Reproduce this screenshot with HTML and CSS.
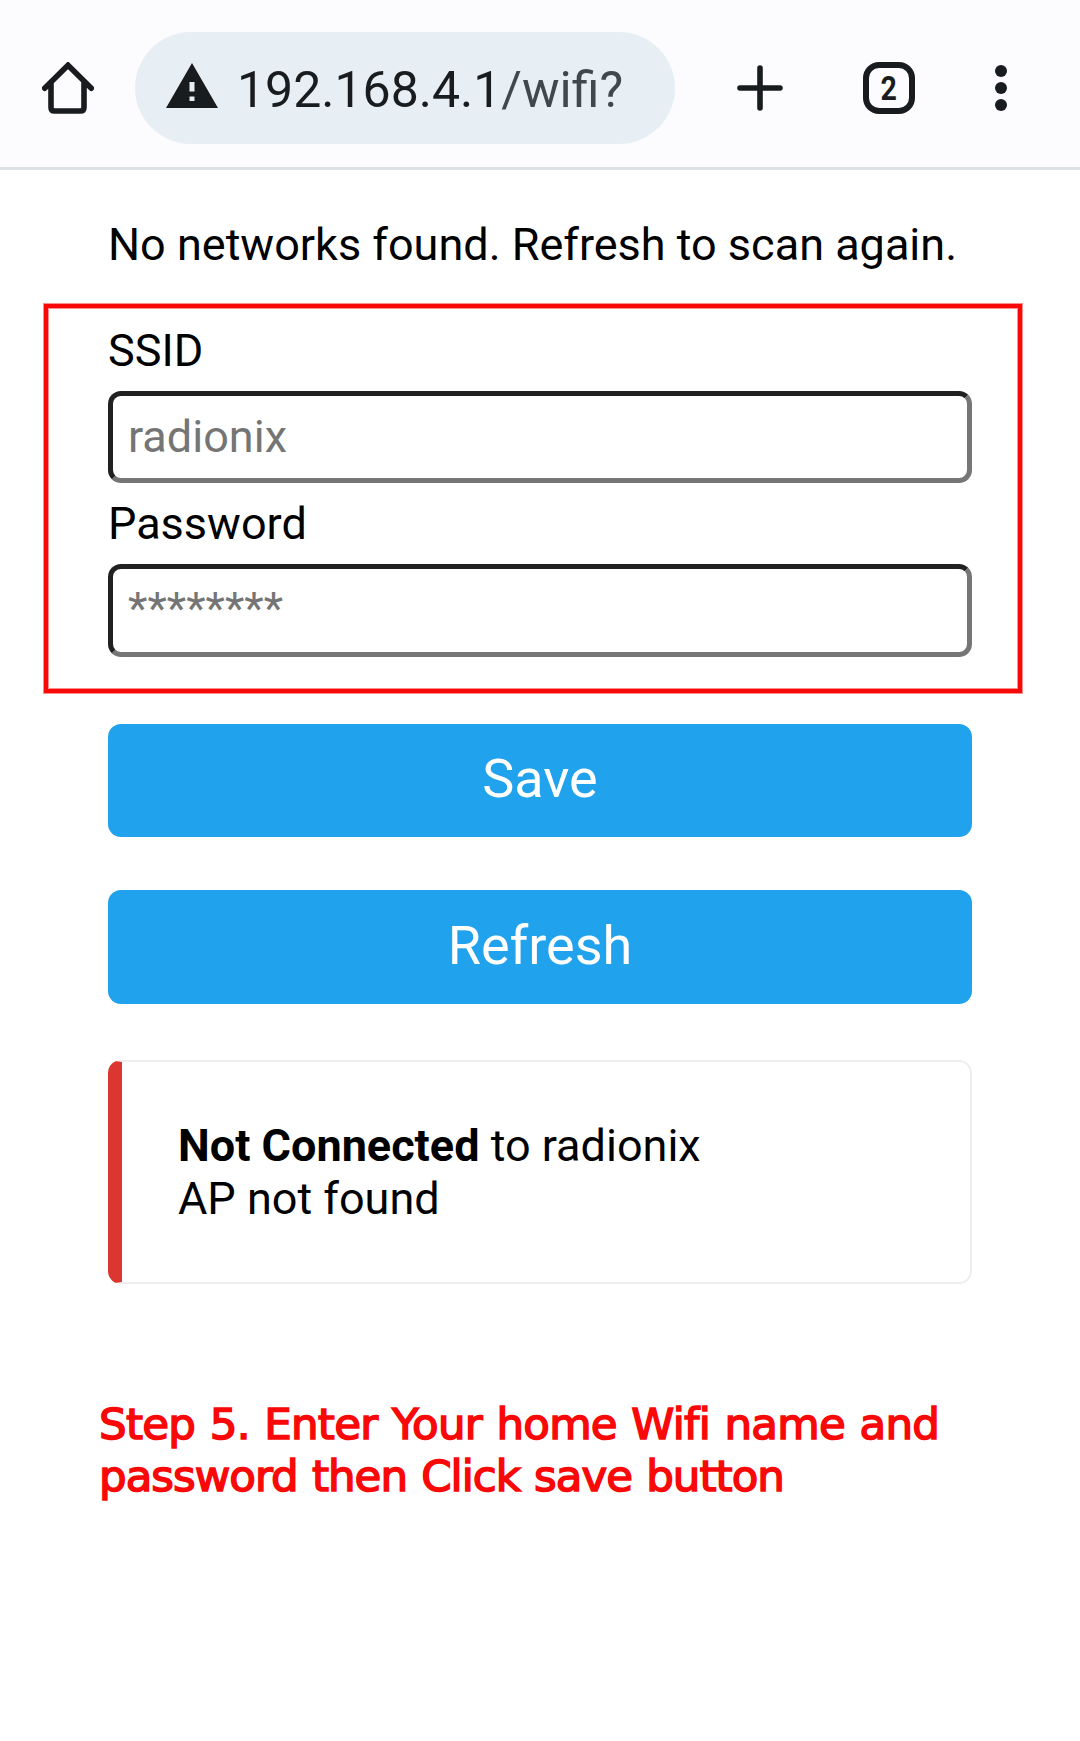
FILE: index.html
```html
<!DOCTYPE html>
<html lang="en">
<head>
<meta charset="utf-8">
<title>WiFi setup</title>
<link rel="stylesheet" href="styles.css">
</head>
<body>
<header class="toolbar">
  <svg class="home" viewBox="0 0 52 52" aria-hidden="true">
    <path d="M2.7 26.2 26 3.2 49.3 26.2M9 20.5V45.5Q9 49 12.5 49H38.5Q42 49 42 45.5V20.5"/>
  </svg>
  <div class="address">
    <svg class="warning" viewBox="0 0 52 45" aria-hidden="true">
      <path fill-rule="evenodd" d="M26 0 52 45H0ZM23.5 19V28.500H28.500V19ZM23.500 33.500V38H28.500V33.500Z"/>
    </svg>
    <span class="url">192.168.4.1<span class="path">/wifi?</span></span>
  </div>
  <svg class="plus" viewBox="0 0 46 46" aria-hidden="true"><path d="M23 3V43M3 23H43"/></svg>
  <div class="tabs"><span>2</span></div>
  <svg class="menu" viewBox="0 0 12 46" aria-hidden="true">
    <circle cx="6" cy="6" r="6"/><circle cx="6" cy="23" r="6"/><circle cx="6" cy="40" r="6"/>
  </svg>
</header>
<main class="page">
  <p class="notice">No networks found. Refresh to scan again.</p>
  <form class="form">
    <div class="fields">
      <label class="label" for="ssid">SSID</label>
      <input class="input" id="ssid" placeholder="radionix">
      <label class="label second" for="pass">Password</label>
      <input class="input password" id="pass" type="password" placeholder="********">
    </div>
    <button class="button save" type="button">Save</button>
    <button class="button refresh" type="button">Refresh</button>
  </form>
  <section class="status"><strong>Not Connected</strong> to radionix<br>AP not found</section>
  <p class="step">Step 5. Enter Your home Wifi name and<br><span class="tight">password then Click save button</span></p>
</main>
</body>
</html>
```
FILE: styles.css
```css
* { box-sizing: border-box; }

body {
  margin: 0;
  background: #fff;
  color: #000;
  font: 45px/53px Roboto, sans-serif;
}

p { margin: 0; }

.toolbar {
  display: flex;
  align-items: center;
  height: 170px;
  padding: 9px 73px 0 42px;
  border-bottom: 3px solid #dce2e6;
  background: #fcfcff;
}

.toolbar svg { display: block; flex: none; }

.home { width: 52px; height: 52px; }

.home path, .plus path {
  fill: none;
  stroke: #191c1e;
  stroke-width: 5.6;
  stroke-linecap: round;
}

.address {
  display: flex;
  align-items: center;
  width: 540px;
  height: 112px;
  margin-left: 41px;
  padding-left: 31px;
  border-radius: 56px;
  background: #e7eef4;
}

.warning { width: 52px; height: 45px; margin-top: -6px; fill: #191c1e; }

.url {
  margin-left: 19px;
  padding-top: 3px;
  color: #191c1e;
  font-size: 50px;
  line-height: 60px;
  white-space: nowrap;
}

.path { color: #41484d; }

.plus { width: 46px; height: 46px; margin-left: 62px; }

.tabs {
  display: flex;
  align-items: center;
  justify-content: center;
  width: 52px;
  height: 52px;
  margin-left: 80px;
  border: 6px solid #191c1e;
  border-radius: 16px;
  color: #191c1e;
  font-size: 34px;
  font-weight: 700;
  line-height: 40px;
}

.tabs span { transform: scaleX(.84); }

.menu { width: 12px; height: 46px; margin-left: 80px; fill: #191c1e; }

.page { padding-top: 48px; }

.notice { margin-left: 108px; white-space: nowrap; }

.form { padding: 33px 58px 0 44px; }

.fields {
  height: 389px;
  padding: 16px 46px 0 60px;
  border: 4px solid #f90808;
  box-shadow: 0 0 0 1px #fb8f8c, inset 0 0 0 1px #fb8f8c;
}

.label { display: block; height: 53px; margin-bottom: 14px; }
.second { margin-top: 14px; }

.input {
  display: block;
  width: 864px;
  height: 92px;
  padding: 0 15px 1px;
  border: 5px solid;
  border-color: #212121 #767676 #767676 #212121;
  border-radius: 13px;
  background: #fff;
  font: inherit;
}

.password { height: 93px; padding-bottom: 4px; }

.input::placeholder { color: #757575; opacity: 1; }

.button {
  display: block;
  width: 864px;
  height: 113px;
  margin-left: 64px;
  padding: 0 0 4px;
  border: 0;
  border-radius: 13px;
  background: #20a2ec;
  color: #fff;
  font: 54px/64px Roboto, sans-serif;
}

.save { margin-top: 31px; }
.refresh { height: 114px; margin-top: 53px; padding-bottom: 3px; }

.status {
  height: 224px;
  width: 864px;
  margin: 56px 0 0 108px;
  padding: 57px 56px 0;
  border: 2px solid #eee;
  border-left: 14px solid #dc3630;
  border-radius: 13px;
}

.step {
  margin: 114px 0 0 99px;
  color: #f90808;
  font: 43.5px/52px "DejaVu Sans", sans-serif;
  font-variant-ligatures: none;
  letter-spacing: -.7px;
  word-spacing: 1.3px;
  white-space: nowrap;
  -webkit-text-stroke: 1.6px #f90808;
}

.tight { letter-spacing: -.97px; }
```
